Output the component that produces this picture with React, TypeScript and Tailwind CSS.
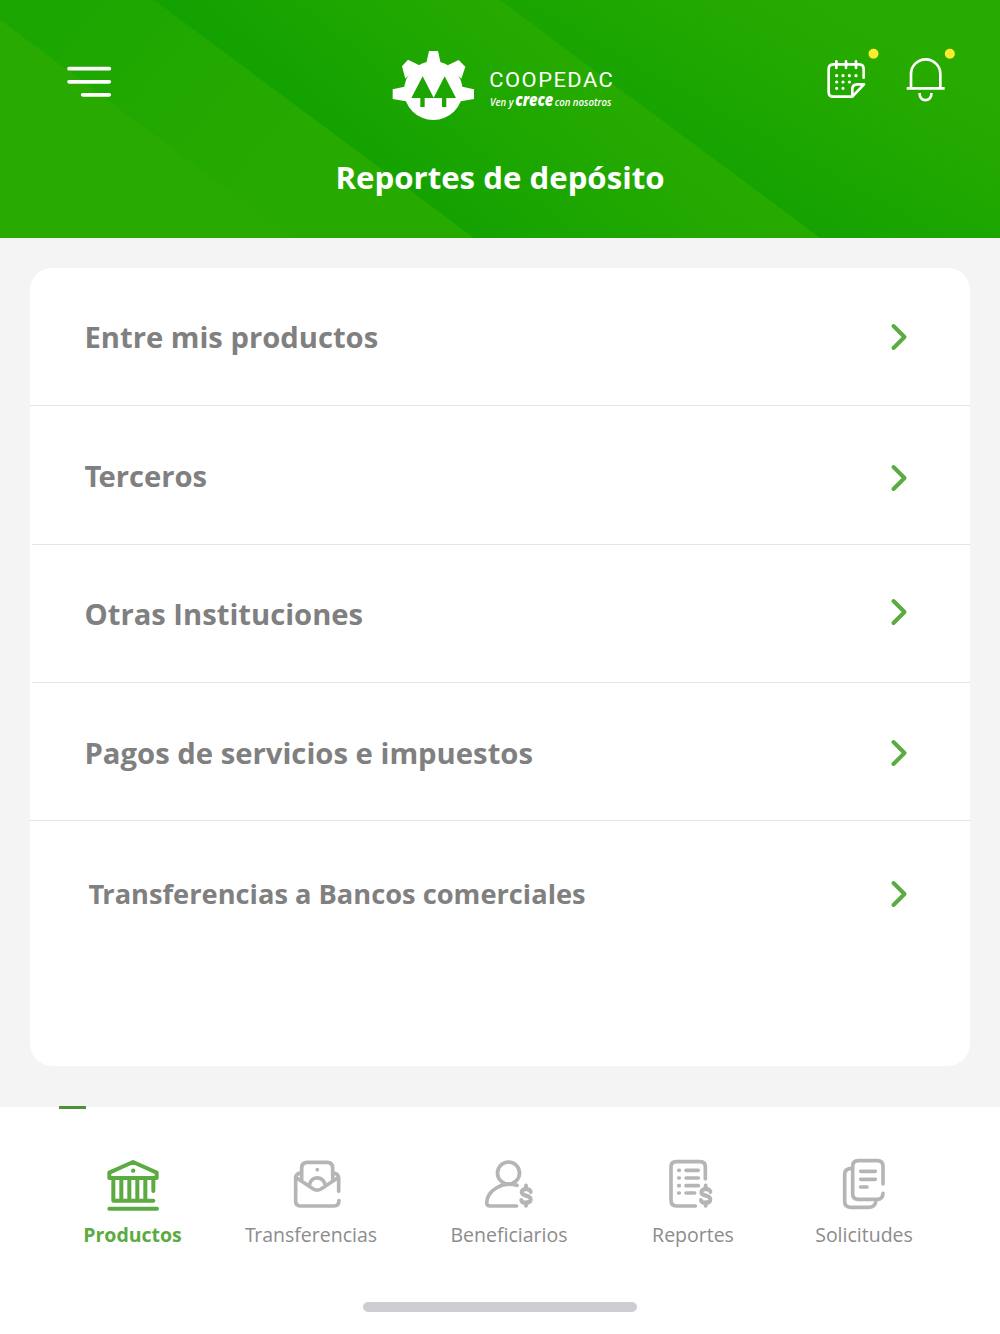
import React from "react";

const sans = "font-['Open_Sans','Noto_Sans',sans-serif]";

function HeaderBackground() {
  return (
    <svg className="absolute inset-0" width="1000" height="238" viewBox="0 0 1000 238" aria-hidden="true">
      <defs>
        <linearGradient id="band1" gradientUnits="userSpaceOnUse" x1="20" y1="0" x2="260" y2="200">
          <stop offset="0" stopColor="#1aa501" />
          <stop offset="1" stopColor="#27aa00" />
        </linearGradient>
        <linearGradient id="band2" gradientUnits="userSpaceOnUse" x1="300" y1="130" x2="440" y2="-40">
          <stop offset="0" stopColor="#12a101" />
          <stop offset="1" stopColor="#26aa00" />
        </linearGradient>
        <linearGradient id="band3" gradientUnits="userSpaceOnUse" x1="735" y1="225" x2="850" y2="20">
          <stop offset="0" stopColor="#12a101" />
          <stop offset="1" stopColor="#28ab00" />
        </linearGradient>
      </defs>
      <rect width="1000" height="238" fill="#28aa00" />
      <path d="M0 0H160L480 238H293L0 20Z" fill="url(#band1)" />
      <path d="M154 0H510L830 238H474Z" fill="url(#band2)" />
      <path d="M500 0H1000V238H820Z" fill="url(#band3)" />
    </svg>
  );
}

function MenuIcon() {
  return (
    <svg className="mt-[10px]" width="80" height="60" viewBox="0 0 240 180" stroke="#fff" strokeWidth="11" strokeLinecap="round">
      <path d="M57 56H178M57 95.500H178M98 134.500H178" />
    </svg>
  );
}

function Logo() {
  return (
    <svg width="250" height="90" viewBox="0 0 750 270">
      <defs>
        <mask id="trees">
          <rect width="300" height="270" fill="#fff" />
          <path d="M128 109L161 173L194 109L228 174H199V201H186V174H134V201H121V174H94Z" fill="#000" />
        </mask>
      </defs>
      <g fill="#fff" mask="url(#trees)">
        <circle cx="160" cy="152" r="88" />
        <path d="M147 33H174L182 69H139ZM84 59L118 76L76 116L66 79ZM236 60L203 76L244 116L256 80ZM38 148L80 139L95 187L38 177ZM282 148L240 139L225 187L282 177Z" />
      </g>
      <text x="328" y="140" textLength="375" lengthAdjust="spacingAndGlyphs" letterSpacing="4" fill="#fff" fontSize="60" fontWeight="400" fontFamily="Roboto, sans-serif">COOPEDAC</text>
      <g fill="#fff" fontFamily="'Open Sans', sans-serif" fontStyle="italic">
        <text x="330" y="197" textLength="70" lengthAdjust="spacingAndGlyphs" fontSize="34" fontWeight="600">Ven y</text>
        <text x="406" y="197" textLength="114" lengthAdjust="spacingAndGlyphs" fontSize="50" fontWeight="800">crece</text>
        <text x="524" y="197" textLength="170" lengthAdjust="spacingAndGlyphs" fontSize="34" fontWeight="600">con nosotros</text>
      </g>
    </svg>
  );
}

function HeaderActions() {
  return (
    <svg className="-mt-[5px]" width="160" height="80" viewBox="0 0 480 240" fill="none" stroke="#fff" strokeWidth="8">
      <path strokeLinecap="round" strokeLinejoin="round" d="M161 128V102q0-14-14-14H70q-14 0-14 14v69q0 14 14 14h57L162 148H142q-15 0-15 15v22M79 79V99M108 79V99M138 79V99" />
      <path strokeWidth="9.500" strokeLinecap="round" d="M80 122h.1M99 122h.1M118 122h.1M138 122h.1M80 141h.1M99 141h.1M118 141h.1M80 160h.1M99 160h.1" />
      <path d="M290 160H404M303 160V117a44 44 0 0 1 88 0V160M329 174v4a17.500 17.500 0 0 0 35 0v-4" />
      <circle cx="190.500" cy="56.500" r="15" fill="#fdeb2d" stroke="none" />
      <circle cx="419.500" cy="56.500" r="15" fill="#fdeb2d" stroke="none" />
    </svg>
  );
}

const dollar = "M12 11C10 3-11 2-11 12C-11 22 12 17 12 28C12 38-10 38-12 30M0-3V4M0 35V42";

const icons: Record<string, React.ReactNode> = {
  bank: (
    <svg width="60" height="60" viewBox="158 183 180 180" fill="none" stroke="#5bab42" strokeWidth="12" strokeLinecap="round" strokeLinejoin="round">
      <path d="M177 249V233L248 201L319 233V249ZM189 249V317H309M213 251V315M237 251V315M261 251V315M285 251V315M309 251V288M177 341H320" />
      <circle cx="248.500" cy="227" r="6.500" fill="#5bab42" stroke="none" />
    </svg>
  ),
  envelope: (
    <svg className="ml-[12px]" width="60" height="60" viewBox="171 33 180 180" fill="none" stroke="#b5b5b5" strokeWidth="11" strokeLinecap="round" strokeLinejoin="round">
      <path d="M326 139V97L273 132Q261 139 250 132L197 97V169Q197 183 211 183H313Q326 183 327 167M197 97Q198 87 210 84M326 97Q324 87 312 84M215 107V69Q215 52 232 52H291Q308 52 308 69V107M238 121C243 91 280 91 286 121" />
      <circle cx="262" cy="74" r="5.500" fill="#b5b5b5" stroke="none" />
    </svg>
  ),
  person: (
    <svg width="60" height="60" viewBox="119 33 180 180" fill="none" stroke="#b5b5b5" strokeWidth="11" strokeLinecap="round" strokeLinejoin="round">
      <circle cx="207.500" cy="84" r="33" />
      <path d="M233 121C190 107 143 137 142 174Q143 183 152 183H232" />
      <path d={dollar} strokeWidth="10" transform="translate(260 126) scale(1.18 1.32)" />
    </svg>
  ),
  report: (
    <svg className="-ml-[6px]" width="60" height="60" viewBox="60 33 180 180" fill="none" stroke="#b5b5b5" strokeWidth="11" strokeLinecap="round" strokeLinejoin="round">
      <path d="M196 101V66Q196 50 180 50H109Q93 50 93 66V166Q93 183 109 183H166M138 76H175M138 99H175M138 122H175M138 144H164M116 76h2M116 99h2M116 122h2M116 144h2" />
      <path d={dollar} strokeWidth="10" transform="translate(197 126) scale(1.18 1.32)" />
    </svg>
  ),
  documents: (
    <svg width="60" height="60" viewBox="102 33 180 180" fill="none" stroke="#b5b5b5" strokeWidth="11" strokeLinecap="round" strokeLinejoin="round">
      <path d="M249 117V64Q249 47 232 47H175Q158 47 158 64V146Q158 163 175 163H232Q248 163 249 145M153 70Q134 71 134 88V169Q134 187 152 187H207Q225 186 228 168M182 79H226M182 103H226M182 126H201" />
    </svg>
  ),
};

const rows = [
  { label: "Entre mis productos", row: "h-[138px] border-b", text: "text-[29.2px] ml-[54.5px] mt-[3px]", arrow: "" },
  { label: "Terceros", row: "ml-[2px] h-[139px] border-b", text: "text-[29.2px] ml-[52.5px] mt-[3px] first-letter:tracking-[-3px]", arrow: "mt-[5px]" },
  { label: "Otras Instituciones", row: "ml-[2px] h-[138px] border-b", text: "text-[29.2px] ml-[52.5px] mt-[2px]", arrow: "-mt-[3px]" },
  { label: "Pagos de servicios e impuestos", row: "h-[138px] border-b", text: "text-[29.25px] ml-[54.5px] mt-[4px]", arrow: "mt-[2px]" },
  { label: "Transferencias a Bancos comerciales", row: "h-[146px]", text: "text-[27.25px] ml-[58.5px] first-letter:tracking-[-2px]", arrow: "" },
];

const tabs = [
  { label: "Productos", icon: "bank", style: "ml-px font-bold text-[#5bab42]", text: "" },
  { label: "Transferencias", icon: "envelope", style: "text-[#8c8c8c]", text: "first-letter:tracking-[-1.5px]" },
  { label: "Beneficiarios", icon: "person", style: "text-[#8c8c8c]", text: "" },
  { label: "Reportes", icon: "report", style: "text-[#8c8c8c]", text: "" },
  { label: "Solicitudes", icon: "documents", style: "text-[#8c8c8c]", text: "" },
];

export default function App() {
  return (
    <div className={`flex h-[1334px] w-[1000px] flex-col overflow-hidden bg-white ${sans}`}>
      <header className="relative h-[238px] shrink-0 overflow-hidden">
        <HeaderBackground />
        <div className="relative mt-[40px] grid h-[90px] grid-cols-[330px_430px_160px] items-start pl-[50px]">
          <MenuIcon />
          <Logo />
          <HeaderActions />
        </div>
        <h1 className="relative mt-[25px] text-center text-[31.2px] leading-[44px] font-bold text-white">Reportes de depósito</h1>
      </header>

      <main className="h-[869px] shrink-0 bg-[#f4f4f4] px-[30px] pt-[30px]">
        <div className="h-[798px] rounded-[22px] bg-white">
          {rows.map((r) => (
            <div key={r.label} className={`flex items-center justify-between border-[#e6e6e6] pr-[62px] ${r.row}`}>
              <span className={`font-bold whitespace-nowrap text-[#808080] ${r.text}`}>{r.label}</span>
              <svg className={r.arrow} width="18" height="28" viewBox="0 0 18 28" fill="none" stroke="#5bab42" strokeWidth="4" strokeLinecap="round" strokeLinejoin="round">
                <path d="M3.500 3L14.500 14L3.500 25" />
              </svg>
            </div>
          ))}
        </div>
      </main>

      <nav className="relative h-[227px] shrink-0 bg-white pl-[42px]">
        <div className="absolute top-[-1px] left-[59px] h-[3px] w-[27px] bg-[#4c9137]" />
        <div className="grid grid-cols-[180px_178px_218px_150px_192px] pt-[49px]">
          {tabs.map((t) => (
            <div key={t.label} className={`flex flex-col items-center text-[19.5px] leading-[28px] ${t.style}`}>
              {icons[t.icon]}
              <span className={`mt-[5px] ${t.text}`}>{t.label}</span>
            </div>
          ))}
        </div>
        <div className="mt-[53px] ml-[321px] h-[10px] w-[274px] rounded-full bg-[#cdcdd2]" />
      </nav>
    </div>
  );
}
